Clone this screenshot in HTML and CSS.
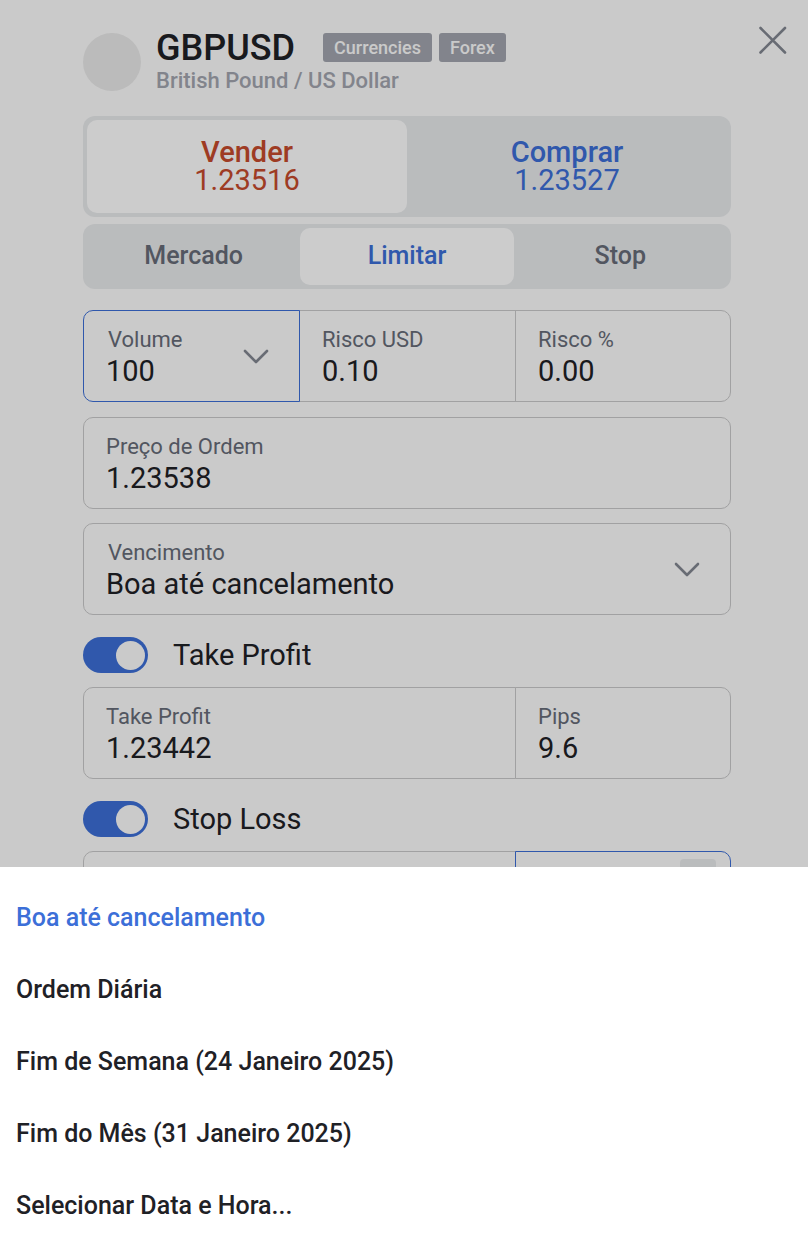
FILE: index.html
```html
<!DOCTYPE html>
<html lang="pt">
<head>
    <meta charset="UTF-8">
    <meta name="viewport" content="width=device-width, initial-scale=1.0">
    <title>GBPUSD</title>
    <link rel="stylesheet" href="styles.css">
</head>
<body>

    <main class="panel">
        <header class="header">
            <div class="avatar"></div>
            <div class="instrument">
                <div class="title-row">
                    <h1 class="symbol">GBPUSD</h1>
                    <span class="badge">Currencies</span>
                    <span class="badge">Forex</span>
                </div>
                <p class="subtitle">British Pound / US Dollar</p>
            </div>
            <button class="close" type="button" aria-label="Fechar">
                <svg width="30" height="30" viewBox="0 0 30 30">
                    <path d="M2.5 3L27 27.5M27 3L2.5 27.5" />
                </svg>
            </button>
        </header>

        <div class="segments side">
            <button class="segment sell active" type="button">
                <span class="side-name">Vender</span>
                <span>1.23516</span>
            </button>
            <button class="segment buy" type="button">
                <span class="side-name">Comprar</span>
                <span>1.23527</span>
            </button>
        </div>

        <div class="segments type">
            <button class="segment" type="button">Mercado</button>
            <button class="segment active" type="button">Limitar</button>
            <button class="segment" type="button">Stop</button>
        </div>

        <div class="fields first">
            <div class="field dropdown focused">
                <div class="field-text">
                    <label for="volume">Volume</label>
                    <select id="volume">
                        <option>100</option>
                    </select>
                </div>
                <svg class="chevron" width="28" height="16" viewBox="0 0 28 16">
                    <path d="M3 3L14 14L25 3" />
                </svg>
            </div>
            <div class="field">
                <div class="field-text">
                    <label for="riskUsd">Risco USD</label>
                    <input type="text" id="riskUsd" value="0.10">
                </div>
            </div>
            <div class="field">
                <div class="field-text">
                    <label for="riskPercent">Risco %</label>
                    <input type="text" id="riskPercent" value="0.00">
                </div>
            </div>
        </div>

        <div class="fields">
            <div class="field full">
                <div class="field-text">
                    <label for="orderPrice">Preço de Ordem</label>
                    <input type="text" id="orderPrice" value="1.23538">
                </div>
            </div>
        </div>

        <div class="fields">
            <div class="field full dropdown">
                <div class="field-text">
                    <label for="expiry">Vencimento</label>
                    <select id="expiry">
                        <option>Boa até cancelamento</option>
                    </select>
                </div>
                <svg class="chevron" width="28" height="16" viewBox="0 0 28 16">
                    <path d="M3 3L14 14L25 3" />
                </svg>
            </div>
        </div>

        <div class="toggle-row">
            <input class="toggle" type="checkbox" id="takeProfitOn" checked>
            <label for="takeProfitOn">Take Profit</label>
        </div>

        <div class="fields">
            <div class="field wide">
                <div class="field-text">
                    <label for="takeProfit">Take Profit</label>
                    <input type="text" id="takeProfit" value="1.23442">
                </div>
            </div>
            <div class="field">
                <div class="field-text">
                    <label for="takePips">Pips</label>
                    <input type="text" id="takePips" value="9.6">
                </div>
            </div>
        </div>

        <div class="toggle-row">
            <input class="toggle" type="checkbox" id="stopLossOn" checked>
            <label for="stopLossOn">Stop Loss</label>
        </div>

        <div class="fields">
            <div class="field wide"></div>
            <div class="field focused stepper">
                <div class="step"></div>
            </div>
        </div>
    </main>

    <div class="backdrop"></div>

    <div class="sheet">
        <button class="option selected" type="button">Boa até cancelamento</button>
        <button class="option" type="button">Ordem Diária</button>
        <button class="option" type="button">Fim de Semana (24 Janeiro 2025)</button>
        <button class="option" type="button">Fim do Mês (31 Janeiro 2025)</button>
        <button class="option" type="button">Selecionar Data e Hora...</button>
    </div>

</body>
</html>
```
FILE: styles.css
```css
:root {
    --page: #fdfdfd;
    --track: #e9ebed;
    --text: #1f2126;
    --label: #676c78;
    --muted: #a3a6af;
    --border: #cacacb;
    --blue: #3c6fd8;
    --red: #c64a2c;
}

* {
    box-sizing: border-box;
}

body {
    margin: 0;
    height: 100vh;
    overflow: hidden;
    background-color: var(--page);
    color: var(--text);
    font-family: Roboto, sans-serif;
}

button,
input,
select {
    font: inherit;
    color: inherit;
    background: none;
    border: none;
    padding: 0;
    margin: 0;
}

button {
    cursor: pointer;
}

svg {
    display: block;
    fill: none;
    stroke: #838791;
    stroke-width: 2.6;
    stroke-linecap: round;
    stroke-linejoin: round;
}

.panel {
    padding: 25px 77px 0 83px;
}

/* Header */

.header {
    display: flex;
    align-items: flex-start;
    margin-right: -57px;
    height: 91px;
}

.avatar {
    width: 58px;
    height: 58px;
    margin: 8px 15px 0 0;
    border-radius: 50%;
    background-color: #eaeaea;
}

.title-row {
    display: flex;
    align-items: center;
    gap: 7px;
}

.symbol {
    margin: 0 21px 0 0;
    padding-top: 2px;
    font-size: 36px;
    line-height: 42px;
    font-weight: 500;
}

.badge {
    padding: 0 11px;
    border-radius: 3px;
    background-color: var(--muted);
    color: var(--page);
    font-size: 18px;
    line-height: 29px;
    font-weight: 500;
}

.subtitle {
    margin: 0;
    color: var(--muted);
    font-size: 22px;
    line-height: 24px;
    font-weight: 500;
}

.close {
    margin-left: auto;
}

/* Segmented controls */

.segments {
    display: flex;
    padding: 4px;
    border-radius: 12px;
    background-color: var(--track);
}

.segment {
    flex: 1;
    padding-bottom: 2px;
    border-radius: 10px;
}

.segment.active {
    background-color: #fff;
}

.side {
    height: 101px;
    margin-bottom: 7px;
    font-size: 29px;
    line-height: 28px;
}

.side span {
    display: block;
}

.side-name {
    font-weight: 500;
}

.sell {
    color: var(--red);
}

.buy {
    color: var(--blue);
}

.type {
    height: 65px;
    color: var(--label);
    font-size: 25px;
    font-weight: 500;
}

.type .active {
    color: var(--blue);
}

/* Fields */

.fields {
    display: grid;
    grid-template-columns: repeat(3, 1fr);
    margin-bottom: 14px;
}

.first {
    margin-top: 21px;
    margin-bottom: 15px;
}

.field {
    display: flex;
    align-items: center;
    min-width: 0;
    height: 92px;
    margin-right: -1px;
    padding: 0 22px;
    border: 1px solid var(--border);
}

.field:first-child {
    border-radius: 10px 0 0 10px;
}

.field:last-child {
    margin-right: 0;
    border-radius: 0 10px 10px 0;
}

.field.full {
    grid-column: span 3;
    border-radius: 10px;
}

.wide {
    grid-column: span 2;
}

.focused {
    z-index: 1;
    border-color: var(--blue);
}

.field-text {
    flex: 1;
    min-width: 0;
    padding-top: 3px;
}

.field label {
    display: block;
    margin-bottom: 2px;
    color: var(--label);
    font-size: 22px;
    line-height: 24px;
}

.field input,
.field select {
    display: block;
    width: 100%;
    height: 34px;
    font-size: 29px;
    line-height: 34px;
    appearance: none;
    outline: none;
}

.dropdown {
    padding-right: 29px;
}

.dropdown label {
    padding-left: 2px;
}

.chevron {
    flex: none;
}

.stepper {
    align-items: flex-start;
    justify-content: flex-end;
    padding: 7px 14px;
}

.step {
    width: 36px;
    height: 36px;
    border-radius: 4px;
    background-color: var(--track);
}

/* Toggles */

.toggle-row {
    display: flex;
    align-items: center;
    gap: 25px;
    margin: 22px 0 14px;
    font-size: 29px;
    line-height: 36px;
}

.toggle {
    display: flex;
    align-items: center;
    justify-content: flex-end;
    width: 65px;
    height: 36px;
    padding: 3px;
    border-radius: 18px;
    background-color: var(--blue);
    appearance: none;
}

.toggle::before {
    content: "";
    width: 29px;
    height: 29px;
    border-radius: 50%;
    background-color: var(--page);
}

/* Expiry sheet */

.backdrop {
    position: fixed;
    inset: 0;
    z-index: 2;
    background-color: rgba(0, 0, 0, 0.2);
}

.sheet {
    position: fixed;
    right: 0;
    bottom: 0;
    left: 0;
    z-index: 3;
    padding: 15px 0 8px;
    background-color: #fff;
}

.option {
    display: block;
    width: 100%;
    padding: 0 16px;
    font-size: 25px;
    line-height: 72px;
    font-weight: 500;
    text-align: left;
}

.option.selected {
    color: var(--blue);
}
```
